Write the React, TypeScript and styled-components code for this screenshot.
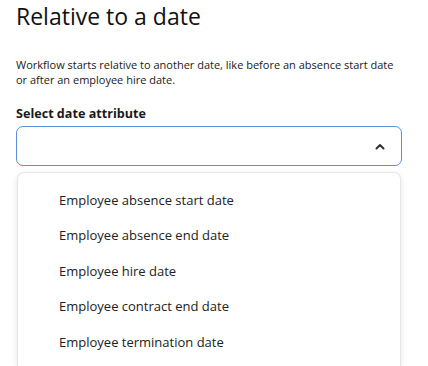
import React from "react";
import styled, { createGlobalStyle } from "styled-components";

const Global = createGlobalStyle`
  html, body { margin: 0; padding: 0; background: #ffffff; }
  body { font-family: "Open Sans", "Noto Sans", sans-serif; color: #1f1f1f; overflow: hidden; }
  * { box-sizing: border-box; }
`;

const Page = styled.div`
  padding: 0 26px 0 16px;
  height: 366px;
  overflow: hidden;
  display: flex;
  flex-direction: column;
`;

const Title = styled.h1`
  margin: 0;
  padding-top: 1px;
  font-size: 23px;
  font-weight: 400;
  line-height: 30px;
  color: #111;
`;

const Description = styled.p`
  margin: 26px 0 0;
  font-size: 11px;
  line-height: 15px;
  color: #1a1a1a;
`;

const Label = styled.div`
  margin-top: 18px;
  font-size: 12.6px;
  font-weight: 700;
  line-height: 18px;
  color: #1a1a1a;
`;

const SelectBox = styled.div`
  margin-top: 3px;
  height: 40px;
  flex-shrink: 0;
  border: 1px solid #5b8fd8;
  border-radius: 7px;
  display: flex;
  align-items: center;
  justify-content: flex-end;
  padding-right: 16px;
  background: #fff;
`;

const Menu = styled.ul`
  list-style: none;
  margin: 6px 1px 0;
  padding: 9px 0 0;
  border: 1px solid #e6e6e6;
  border-bottom: none;
  border-radius: 7px 7px 0 0;
  box-shadow: 0 2px 6px rgba(0, 0, 0, 0.1);
  flex: 1;
  min-height: 0;
  background: #fff;
`;

const Item = styled.li`
  height: 35.5px;
  display: flex;
  align-items: center;
  padding-left: 41px;
  font-size: 13px;
  color: #222;
`;

const items = [
  "Employee absence start date",
  "Employee absence end date",
  "Employee hire date",
  "Employee contract end date",
  "Employee termination date",
];

export default function App() {
  return (
    <>
      <Global />
      <Page>
        <Title>Relative to a date</Title>
        <Description>
          Workflow starts relative to another date, like before an absence start date
          or after an employee hire date.
        </Description>
        <Label>Select date attribute</Label>
        <SelectBox>
          <svg width="10" height="7" viewBox="0 0 10 7">
            <polyline points="1.5,5.5 5,2 8.5,5.5" fill="none" stroke="#333" strokeWidth="2" strokeLinecap="round" strokeLinejoin="round" />
          </svg>
        </SelectBox>
        <Menu>
          {items.map((t) => (
            <Item key={t}>{t}</Item>
          ))}
        </Menu>
      </Page>
    </>
  );
}
